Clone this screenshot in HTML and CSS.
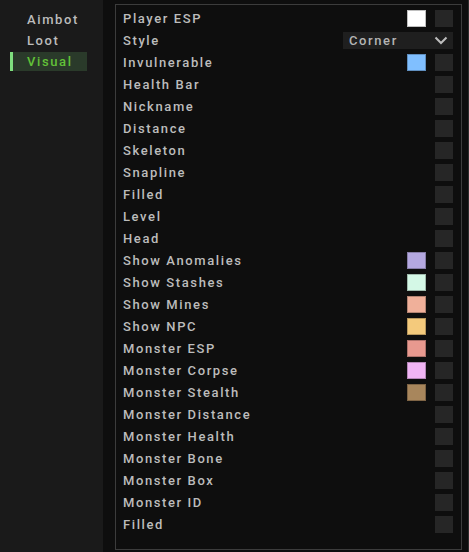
FILE: index.html
```html
<!DOCTYPE html>
<html>
<head>
<meta charset="utf-8">
<link rel="stylesheet" href="styles.css">
</head>
<body>
<div class="app">
  <nav class="sidebar">
    <div class="tab">Aimbot</div>
    <div class="tab">Loot</div>
    <div class="tab active">Visual</div>
  </nav>
  <main class="main">
    <div class="panel">
      <div class="row"><span class="label">Player ESP</span><span class="swatch" style="background:#ffffff"></span><span class="check"></span></div>
      <div class="row"><span class="label">Style</span>
        <div class="select"><span>Corner</span>
          <svg class="chev" width="14" height="9" viewBox="0 0 14 9"><path d="M1.5 1.5 L7 7 L12.5 1.5" fill="none" stroke="#bdbdbd" stroke-width="2"/></svg>
        </div>
      </div>
      <div class="row"><span class="label">Invulnerable</span><span class="swatch" style="background:#80bfff"></span><span class="check"></span></div>
      <div class="row"><span class="label">Health Bar</span><span class="check"></span></div>
      <div class="row"><span class="label">Nickname</span><span class="check"></span></div>
      <div class="row"><span class="label">Distance</span><span class="check"></span></div>
      <div class="row"><span class="label">Skeleton</span><span class="check"></span></div>
      <div class="row"><span class="label">Snapline</span><span class="check"></span></div>
      <div class="row"><span class="label">Filled</span><span class="check"></span></div>
      <div class="row"><span class="label">Level</span><span class="check"></span></div>
      <div class="row"><span class="label">Head</span><span class="check"></span></div>
      <div class="row"><span class="label">Show Anomalies</span><span class="swatch" style="background:#b4a8e0"></span><span class="check"></span></div>
      <div class="row"><span class="label">Show Stashes</span><span class="swatch" style="background:#d4f8e6"></span><span class="check"></span></div>
      <div class="row"><span class="label">Show Mines</span><span class="swatch" style="background:#f0b09a"></span><span class="check"></span></div>
      <div class="row"><span class="label">Show NPC</span><span class="swatch" style="background:#f4ca7c"></span><span class="check"></span></div>
      <div class="row"><span class="label">Monster ESP</span><span class="swatch" style="background:#e8998f"></span><span class="check"></span></div>
      <div class="row"><span class="label">Monster Corpse</span><span class="swatch" style="background:#f0b4f4"></span><span class="check"></span></div>
      <div class="row"><span class="label">Monster Stealth</span><span class="swatch" style="background:#a8865c"></span><span class="check"></span></div>
      <div class="row"><span class="label">Monster Distance</span><span class="check"></span></div>
      <div class="row"><span class="label">Monster Health</span><span class="check"></span></div>
      <div class="row"><span class="label">Monster Bone</span><span class="check"></span></div>
      <div class="row"><span class="label">Monster Box</span><span class="check"></span></div>
      <div class="row"><span class="label">Monster ID</span><span class="check"></span></div>
      <div class="row"><span class="label">Filled</span><span class="check"></span></div>
    </div>
  </main>
</div>
</body>
</html>
```
FILE: styles.css
```css
html, body {
  margin: 0;
  padding: 0;
  background: #0e0e0e;
}
body {
  font-family: Roboto, "Liberation Sans", sans-serif;
  font-size: 13px;
  font-weight: 500;
  letter-spacing: 1.6px;
  color: #bcbcbc;
}
.app {
  display: flex;
  width: 469px;
  height: 552px;
  box-sizing: border-box;
}
.sidebar {
  width: 103px;
  flex: none;
  background: #1a1a1a;
  padding: 10px 16px 0 10px;
  box-sizing: border-box;
  display: flex;
  flex-direction: column;
  gap: 2px;
}
.tab {
  height: 19px;
  line-height: 19px;
  padding-left: 17px;
  color: #bcbcbc;
}
.tab.active {
  background: #2a3a2a;
  color: #62c238;
  border-left: 3px solid #7ee07e;
  padding-left: 14px;
}
.main {
  flex: 1;
  padding: 4px 6px 2px 12px;
  border-right: 1px solid #2e2e2e;
  box-sizing: border-box;
}
.panel {
  border: 1px solid #3c3c3c;
  height: 546px;
  box-sizing: border-box;
  padding: 2px 8px 0 7px;
}
.row {
  display: flex;
  align-items: center;
  height: 22px;
}
.label {
  flex: 1;
}
.swatch {
  width: 19px;
  height: 17px;
  box-sizing: border-box;
  border: 1px solid rgba(0,0,0,0.25);
  margin-right: 9px;
}
.check {
  width: 18px;
  height: 17px;
  background: #262626;
}
.select {
  width: 110px;
  height: 17px;
  background: #1f1f1f;
  display: flex;
  align-items: center;
  justify-content: space-between;
  padding: 0 5px 0 6px;
  box-sizing: border-box;
  color: #b4b4b4;
}
.chev {
  display: block;
}
```
